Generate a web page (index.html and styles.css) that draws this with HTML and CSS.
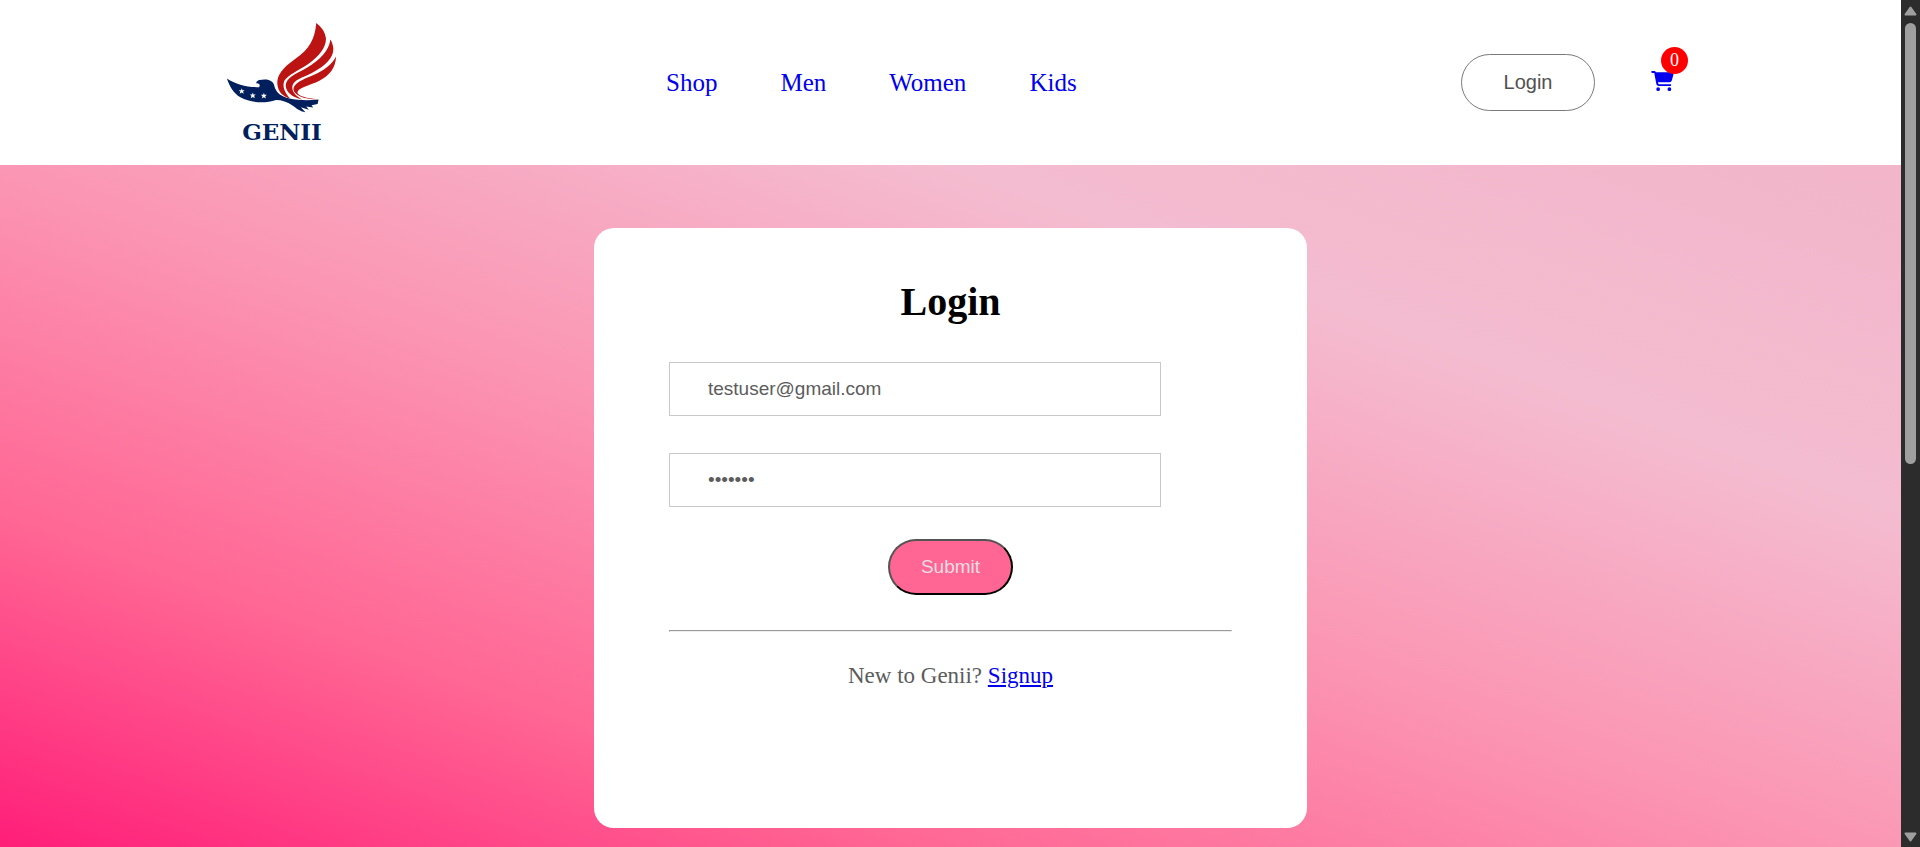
FILE: index.html
```html
<!DOCTYPE html>
<html lang="en">
<head>
<meta charset="utf-8">
<title>Genii</title>
<link rel="stylesheet" href="styles.css">
</head>
<body>
<div class="viewport">
  <div class="page">
    <header class="navbar">
      <a class="logo" href="#" aria-label="Genii home">
        <svg class="logo-bird" viewBox="50 36 332 274" aria-hidden="true">
          <path fill="#bb1412" d="M318 39C314 86 298 118 255 146C216 174 201 194 202 220C204 244 218 258 240 264C224 246 216 228 223 211C234 193 262 182 291 163C328 138 347 112 347 86C345 64 332 50 318 39Z"/>
          <path fill="#bb1412" d="M360 88C356 122 330 148 290 172C254 192 228 202 227 226C229 246 246 260 276 267C256 256 244 242 247 226C252 208 276 202 305 188C348 166 369 142 369 116C368 104 365 96 360 88Z"/>
          <path fill="#bb1412" d="M377 139C364 164 342 180 310 194C276 208 252 218 250 236C252 254 280 266 320 266C292 264 262 256 262 246C264 232 296 226 326 212C358 196 376 172 377 139Z"/>
          <path fill="#001f5c" d="M52 204C78 222 112 230 148 230C152 224 148 217 139 219C140 210 148 208 158 208C176 205 190 212 193 226C198 246 212 258 238 264C266 270 296 270 325 267L322 280L304 284L309 291L288 288L296 297L272 290L286 305C268 302 258 292 246 284C232 274 216 268 198 268C166 279 122 277 92 260C72 248 60 228 52 204Z"/>
          <g fill="#fff">
            <path id="star" d="M96 233L98 239L105 239L100 243L102 250L96 246L90 250L92 243L87 239L94 239Z"/>
            <use href="#star" x="33" y="13"/>
            <use href="#star" x="66" y="14"/>
          </g>
        </svg>
        <span class="logo-name">GENII</span>
      </a>
      <nav class="menu">
        <a href="#">Shop</a>
        <a href="#">Men</a>
        <a href="#">Women</a>
        <a href="#">Kids</a>
      </nav>
      <div class="actions">
        <button class="login-button" type="button">Login</button>
        <a class="cart" href="#" aria-label="Cart">
          <svg class="cart-icon" viewBox="0 0 576 512" aria-hidden="true"><path fill="currentColor" d="M0 24C0 10.7 10.7 0 24 0H69.5c22 0 41.5 12.8 50.6 32h411c26.3 0 45.5 25 38.6 50.4l-41 152.3c-8.5 31.4-37 53.3-69.5 53.3H170.7l5.4 28.5c2.2 11.3 12.1 19.5 23.6 19.5H488c13.3 0 24 10.7 24 24s-10.7 24-24 24H199.7c-34.6 0-64.3-24.6-70.7-58.5L77.4 54.5c-.7-3.8-4-6.5-7.9-6.5H24C10.7 48 0 37.3 0 24zM128 464a48 48 0 1 1 96 0 48 48 0 1 1-96 0zm336-48a48 48 0 1 1 0 96 48 48 0 1 1 0-96z"/></svg>
          <span class="cart-count">0</span>
        </a>
      </div>
    </header>
    <main class="hero">
      <form class="card">
        <h1 class="card-title">Login</h1>
        <input class="field" type="email" aria-label="Email address" value="testuser@gmail.com">
        <input class="field" type="password" aria-label="Password" value="genii12">
        <button class="submit" type="button">Submit</button>
        <hr class="rule">
        <p class="signup">New to Genii? <a href="#">Signup</a></p>
      </form>
    </main>
  </div>
  <div class="scrollbar" aria-hidden="true">
    <svg class="arrow" viewBox="0 0 13 10"><path d="M6.500 1.500L11.500 8.500H1.500Z"/></svg>
    <div class="track"><div class="thumb"></div></div>
    <svg class="arrow" viewBox="0 0 13 10"><path d="M6.500 8.500L11.500 1.500H1.500Z"/></svg>
  </div>
</div>
</body>
</html>
```
FILE: styles.css
```css
* {
  box-sizing: border-box;
}

body {
  margin: 0;
  overflow: hidden;
  font-family: "Liberation Serif", "Times New Roman", serif;
}

.viewport {
  display: flex;
  height: 100vh;
  overflow: hidden;
}

.page {
  flex: 1;
  min-width: 0;
  overflow: hidden;
}

.navbar {
  display: flex;
  align-items: center;
  padding: 22px 227px 22px 226px;
}

.logo {
  display: flex;
  flex-direction: column;
  align-items: center;
  width: 112px;
  height: 121px;
  gap: 8px;
  text-decoration: none;
}

.logo-bird {
  width: 112px;
  height: 92px;
  flex: none;
}

.logo-name {
  color: #001f5c;
  font-family: "DejaVu Serif", serif;
  font-size: 23px;
  font-weight: bold;
  line-height: 20px;
}

.menu {
  display: flex;
  gap: 63px;
  margin-left: 328px;
}

.menu a {
  color: #0000ee;
  font-size: 25px;
  text-decoration: none;
}

.actions {
  display: flex;
  align-items: center;
  gap: 56px;
  margin-left: auto;
}

.login-button {
  width: 134px;
  height: 57px;
  border: 1px solid #7a7a7a;
  border-radius: 75px;
  background: #fff;
  color: #515151;
  font-family: "Liberation Sans", Arial, sans-serif;
  font-size: 20px;
}

.cart {
  position: relative;
  display: block;
  padding-bottom: 4px;
  color: #0000ee;
}

.cart-icon {
  display: block;
  width: 23px;
  height: 20px;
}

.cart-count {
  position: absolute;
  top: -24px;
  left: 10px;
  width: 27px;
  height: 27px;
  border-radius: 50%;
  background: #ff0000;
  color: #fff;
  font-size: 18px;
  line-height: 27px;
  text-align: center;
}

.hero {
  min-height: 700px;
  padding: 63px 24px 37px;
  background: linear-gradient(20deg, #ff1a77 0%, #ff6694 25%, #fb96b4 50%, #f4bcd0 75%, #f2b5ca 100%);
}

.card {
  max-width: 713px;
  min-height: 600px;
  margin: 0 auto;
  padding: 51px 75px;
  border-radius: 20px;
  background: #fff;
}

.card-title {
  margin: 0 0 37px;
  font-size: 40px;
  line-height: 46px;
  text-align: center;
}

.field {
  display: block;
  width: 492px;
  max-width: 100%;
  height: 54px;
  margin-bottom: 37px;
  padding: 0 38px 1px;
  border: 1px solid #c9c9c9;
  outline: none;
  background: #fff;
  color: #5c5c5c;
  font-family: "Liberation Sans", Arial, sans-serif;
  font-size: 19px;
}

.submit {
  display: block;
  width: 125px;
  height: 56px;
  margin: -5px auto 35px;
  border: 2px outset #000;
  border-radius: 30px;
  background: #ff6694;
  color: #eedde3;
  font-family: "Liberation Sans", Arial, sans-serif;
  font-size: 19px;
}

.rule {
  margin: 0 0 31px;
}

.signup {
  margin: 0;
  color: #5c5c5c;
  font-size: 23px;
  line-height: 26px;
  text-align: center;
}

.signup a {
  color: #0000ee;
}

.scrollbar {
  display: flex;
  flex: none;
  flex-direction: column;
  align-items: center;
  gap: 7px;
  width: 19px;
  padding: 6px 0 5px;
  background: #2c2c2c;
}

.arrow {
  width: 13px;
  height: 10px;
  fill: #9f9f9f;
  stroke: #9f9f9f;
  stroke-width: 2;
  stroke-linejoin: round;
}

.track {
  flex: 1;
}

.thumb {
  width: 11px;
  height: 55%;
  border-radius: 6px;
  background: #9f9f9f;
}
```
